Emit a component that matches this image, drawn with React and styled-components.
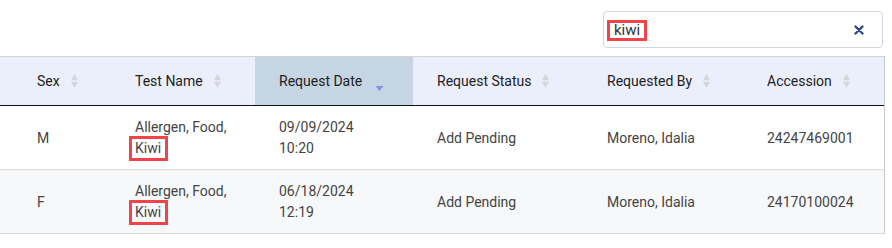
import styled, { createGlobalStyle } from "styled-components";

const GlobalStyle = createGlobalStyle`
  html, body {
    margin: 0;
    padding: 0;
    background: #fff;
    font-family: Roboto, "Liberation Sans", Arial, sans-serif;
  }
`;

const columns = [
  { key: "sex", label: "Sex", width: 111, pad: 37 },
  { key: "test", label: "Test Name", width: 144 },
  { key: "date", label: "Request Date", width: 158, active: true },
  { key: "status", label: "Request Status", width: 170 },
  { key: "by", label: "Requested By", width: 160 },
  { key: "acc", label: "Accession", width: 140 },
];

const rows = [
  {
    sex: "M",
    test: ["Allergen, Food,", "Kiwi"],
    date: ["09/09/2024", "10:20"],
    status: "Add Pending",
    by: "Moreno, Idalia",
    acc: "24247469001",
  },
  {
    sex: "F",
    test: ["Allergen, Food,", "Kiwi"],
    date: ["06/18/2024", "12:19"],
    status: "Add Pending",
    by: "Moreno, Idalia",
    acc: "24170100024",
  },
];

function SortIcon({ active }) {
  if (active)
    return (
      <SortSvg width="9" height="14" viewBox="0 0 9 14" $active>
        <path d="M0.5 9 L8.5 9 L4.5 14 Z" fill="#8b8ff2" />
      </SortSvg>
    );
  return (
    <SortSvg width="7" height="14" viewBox="0 0 7 14">
      <path d="M3.5 0 L7 6.3 L0 6.3 Z" fill="#d6d6d9" />
      <path d="M0 7.7 L7 7.7 L3.5 14 Z" fill="#d6d6d9" />
    </SortSvg>
  );
}

export default function App() {
  return (
    <>
      <GlobalStyle />
      <Page>
        <Toolbar>
          <SearchBox>
            <SearchMark>kiwi</SearchMark>
            <ClearBtn>
              <svg width="10" height="10" viewBox="0 0 10 10">
                <path
                  d="M1.5 1.5 L8.5 8.5 M8.5 1.5 L1.5 8.5"
                  stroke="#2d4a7e"
                  strokeWidth="2.4"
                  strokeLinecap="round"
                />
              </svg>
            </ClearBtn>
          </SearchBox>
        </Toolbar>

        <Table>
          <HeadRow>
            {columns.map((c) => (
              <HeadCell
                key={c.key}
                $w={c.width}
                $pad={c.pad}
                $active={c.active}
              >
                <span>{c.label}</span>
                <SortIcon active={c.active} />
              </HeadCell>
            ))}
          </HeadRow>

          {rows.map((r, i) => (
            <BodyRow key={i} $striped={i % 2 === 1}>
              <Cell $w={111} $pad={37}>
                {r.sex}
              </Cell>
              <Cell $w={144}>
                <Lines>
                  <span>{r.test[0]}</span>
                  <CellMark>{r.test[1]}</CellMark>
                </Lines>
              </Cell>
              <Cell $w={158}>
                <Lines>
                  <span>{r.date[0]}</span>
                  <span>{r.date[1]}</span>
                </Lines>
              </Cell>
              <Cell $w={170}>{r.status}</Cell>
              <Cell $w={160}>{r.by}</Cell>
              <Cell $w={140}>{r.acc}</Cell>
            </BodyRow>
          ))}
        </Table>
      </Page>
    </>
  );
}

const Page = styled.div`
  width: 892px;
  height: 248px;
  overflow: hidden;
`;

const Toolbar = styled.div`
  display: flex;
  justify-content: flex-end;
  padding: 11px 9px 0 0;
  height: 56px;
  box-sizing: border-box;
`;

const SearchBox = styled.div`
  display: flex;
  align-items: center;
  justify-content: space-between;
  width: 280px;
  height: 37px;
  box-sizing: border-box;
  padding: 0 18px 0 3px;
  border: 1px solid #d2d8e2;
  border-radius: 4px;
  background: #fff;
`;

const SearchMark = styled.span`
  border: 3px solid #f2434a;
  padding: 0 4px;
  margin-top: 2px;
  font-size: 15px;
  line-height: 15px;
  color: #333;
`;

const CellMark = styled.span`
  width: fit-content;
  border: 3px solid #f2434a;
  padding: 2px 4px 2px 3px;
  margin: -2px 0 -2px -6px;
  font-size: 14px;
  line-height: 15px;
  color: #444;
`;

const ClearBtn = styled.button`
  display: flex;
  align-items: center;
  border: none;
  background: none;
  padding: 0;
  cursor: pointer;
`;

const Table = styled.div`
  width: 884px;
  border-top: 1px solid #d4d4d4;
  border-right: 1px solid #c9c9c9;
`;

const HeadRow = styled.div`
  display: flex;
  height: 48px;
  background: #ebeffb;
  border-bottom: 1px solid #111;
`;

const HeadCell = styled.div`
  display: flex;
  align-items: center;
  gap: ${(p) => (p.$active ? "13px" : "11px")};
  width: ${(p) => p.$w}px;
  box-sizing: border-box;
  padding-left: ${(p) => p.$pad || 24}px;
  background: ${(p) => (p.$active ? "#c6d5e3" : "transparent")};
  font-size: 14px;
  color: #222;
`;

const SortSvg = styled.svg`
  flex-shrink: 0;
  margin-top: ${(p) => (p.$active ? "6px" : "0")};
`;

const BodyRow = styled.div`
  display: flex;
  height: 63px;
  background: ${(p) => (p.$striped ? "#f7f8fa" : "#fff")};
  border-bottom: 1px solid #dadada;
`;

const Cell = styled.div`
  display: flex;
  align-items: center;
  width: ${(p) => p.$w}px;
  box-sizing: border-box;
  padding-left: ${(p) => p.$pad || 24}px;
  font-size: 14px;
  color: #444;
`;

const Lines = styled.div`
  display: flex;
  flex-direction: column;
  line-height: 21px;
`;
